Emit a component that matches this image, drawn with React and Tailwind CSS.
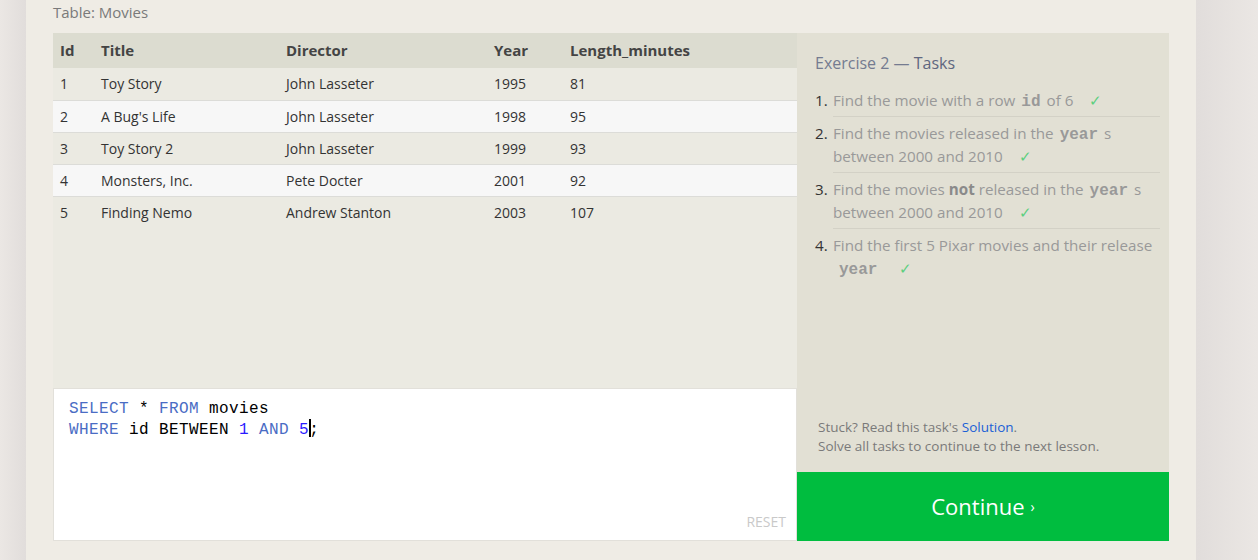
import React from "react";

const rows = [
  ["1", "Toy Story", "John Lasseter", "1995", "81"],
  ["2", "A Bug's Life", "John Lasseter", "1998", "95"],
  ["3", "Toy Story 2", "John Lasseter", "1999", "93"],
  ["4", "Monsters, Inc.", "Pete Docter", "2001", "92"],
  ["5", "Finding Nemo", "Andrew Stanton", "2003", "107"],
];

const cols = ["w-[41px]", "w-[185px]", "w-[208px]", "w-[76px]", "flex-1"];

function Check() {
  return <span className="ml-[12px] text-[#5ccf7f]">✓</span>;
}

function Code({ children }) {
  return (
    <span className="font-['Liberation_Mono',monospace] font-bold text-[16px] text-[#999] mx-[6px] leading-none">{children}</span>
  );
}

export default function App() {
  const font = "font-['Open_Sans',sans-serif]";
  return (
    <div className={`flex w-full h-[560px] overflow-hidden ${font}`}>
      <div className="w-[26px] shrink-0 bg-gradient-to-r from-[#ebe7e4] to-[#e1dddb]" />
      <div className="flex-1 bg-[#efece5] pl-[27px] pr-[27px] flex flex-col">
        <div className="h-[33px] pt-[2px] text-[15px] leading-[20px] text-[#7a7a7a]">Table: Movies</div>
        <div className="flex h-[508px]">
          <div className="w-[744px] flex flex-col">
            <div className="h-[355px] bg-[#ebeae2] flex flex-col">
              <div className="flex h-[35px] bg-[#dcdcd0] items-center text-[15px] font-bold text-[#444]">
                {["Id", "Title", "Director", "Year", "Length_minutes"].map((h, i) => (
                  <div key={i} className={`${cols[i]} pl-[7px]`}>{h}</div>
                ))}
              </div>
              {rows.map((r, ri) => (
                <div
                  key={ri}
                  className={`flex h-[32px] items-center pb-[1px] text-[14px] text-[#333] ${ri > 0 ? "border-t border-[#dcdcd8]" : ""} ${ri % 2 === 1 ? "bg-[#f7f7f7]" : "bg-[#ebeae2]"}`}
                >
                  {r.map((c, i) => (
                    <div key={i} className={`${cols[i]} pl-[7px]`}>{c}</div>
                  ))}
                </div>
              ))}
            </div>
            <div className="relative h-[153px] bg-white border border-[#e2e0da] pl-[15px] pt-[10px] font-['Liberation_Mono',monospace] text-[16px] leading-[20px] tracking-[0.4px] text-black">
              <div>
                <span className="text-[#4a6cc4]">SELECT</span> * <span className="text-[#4a6cc4]">FROM</span> movies
              </div>
              <div>
                <span className="text-[#4a6cc4]">WHERE</span> id BETWEEN <span className="text-[#2a1aff]">1</span>{" "}
                <span className="text-[#4a6cc4]">AND</span> <span className="text-[#2a1aff]">5</span>
                <span className="inline-block w-[2px] h-[18px] bg-black align-[-3px] -mr-[2px]" />;
              </div>
              <div className={`absolute right-[10px] bottom-[8px] text-[14px] ${font} text-[#c9c9c9] tracking-normal`}>RESET</div>
            </div>
          </div>
          <div className="w-[372px] flex flex-col">
            <div className="flex-1 bg-[#e2e0d4] pl-[18px] pr-[9px] pt-[19px] flex flex-col">
              <div className="text-[16px] leading-[22px] text-[#747b90]">
                Exercise 2 — <span className="text-[#5f6780]">Tasks</span>
              </div>
              <ol className="mt-[15px] text-[15.2px] leading-[23px] text-[#999]">
                <li className="flex pb-[5px]">
                  <span className="w-[18px] shrink-0 text-[#333]">1.</span>
                  <span className="flex-1 border-b border-[#d3d1c6] pb-[4px]">
                    Find the movie with a row<Code>id</Code>of 6 <Check />
                  </span>
                </li>
                <li className="flex pb-[5px]">
                  <span className="w-[18px] shrink-0 text-[#333]">2.</span>
                  <span className="flex-1 border-b border-[#d3d1c6] pb-[4px]">
                    Find the movies released in the<Code>year</Code>s
                    <br />
                    between 2000 and 2010 <Check />
                  </span>
                </li>
                <li className="flex pb-[5px]">
                  <span className="w-[18px] shrink-0 text-[#333]">3.</span>
                  <span className="flex-1 border-b border-[#d3d1c6] pb-[4px]">
                    Find the movies <b className="text-[#8a8a8a]">not</b> released in the<Code>year</Code>s
                    <br />
                    between 2000 and 2010 <Check />
                  </span>
                </li>
                <li className="flex">
                  <span className="w-[18px] shrink-0 text-[#333]">4.</span>
                  <span className="flex-1">
                    Find the first 5 Pixar movies and their release
                    <br />
                    <Code>year</Code> <Check />
                  </span>
                </li>
              </ol>
              <div className="mt-auto pl-[3px] pb-[16px] text-[13.5px] leading-[19px] text-[#7a7a7a]">
                Stuck? Read this task's <span className="text-[#1a5fd6]">Solution</span>.
                <br />
                Solve all tasks to continue to the next lesson.
              </div>
            </div>
            <div className="h-[69px] bg-[#00bd3f] flex items-center justify-center text-white text-[22px]">
              Continue <span className="ml-[6px] text-[14px]">›</span>
            </div>
          </div>
        </div>
      </div>
      <div className="w-[62px] shrink-0 bg-gradient-to-r from-[#e1dddb] to-[#ebe7e4]" />
    </div>
  );
}
